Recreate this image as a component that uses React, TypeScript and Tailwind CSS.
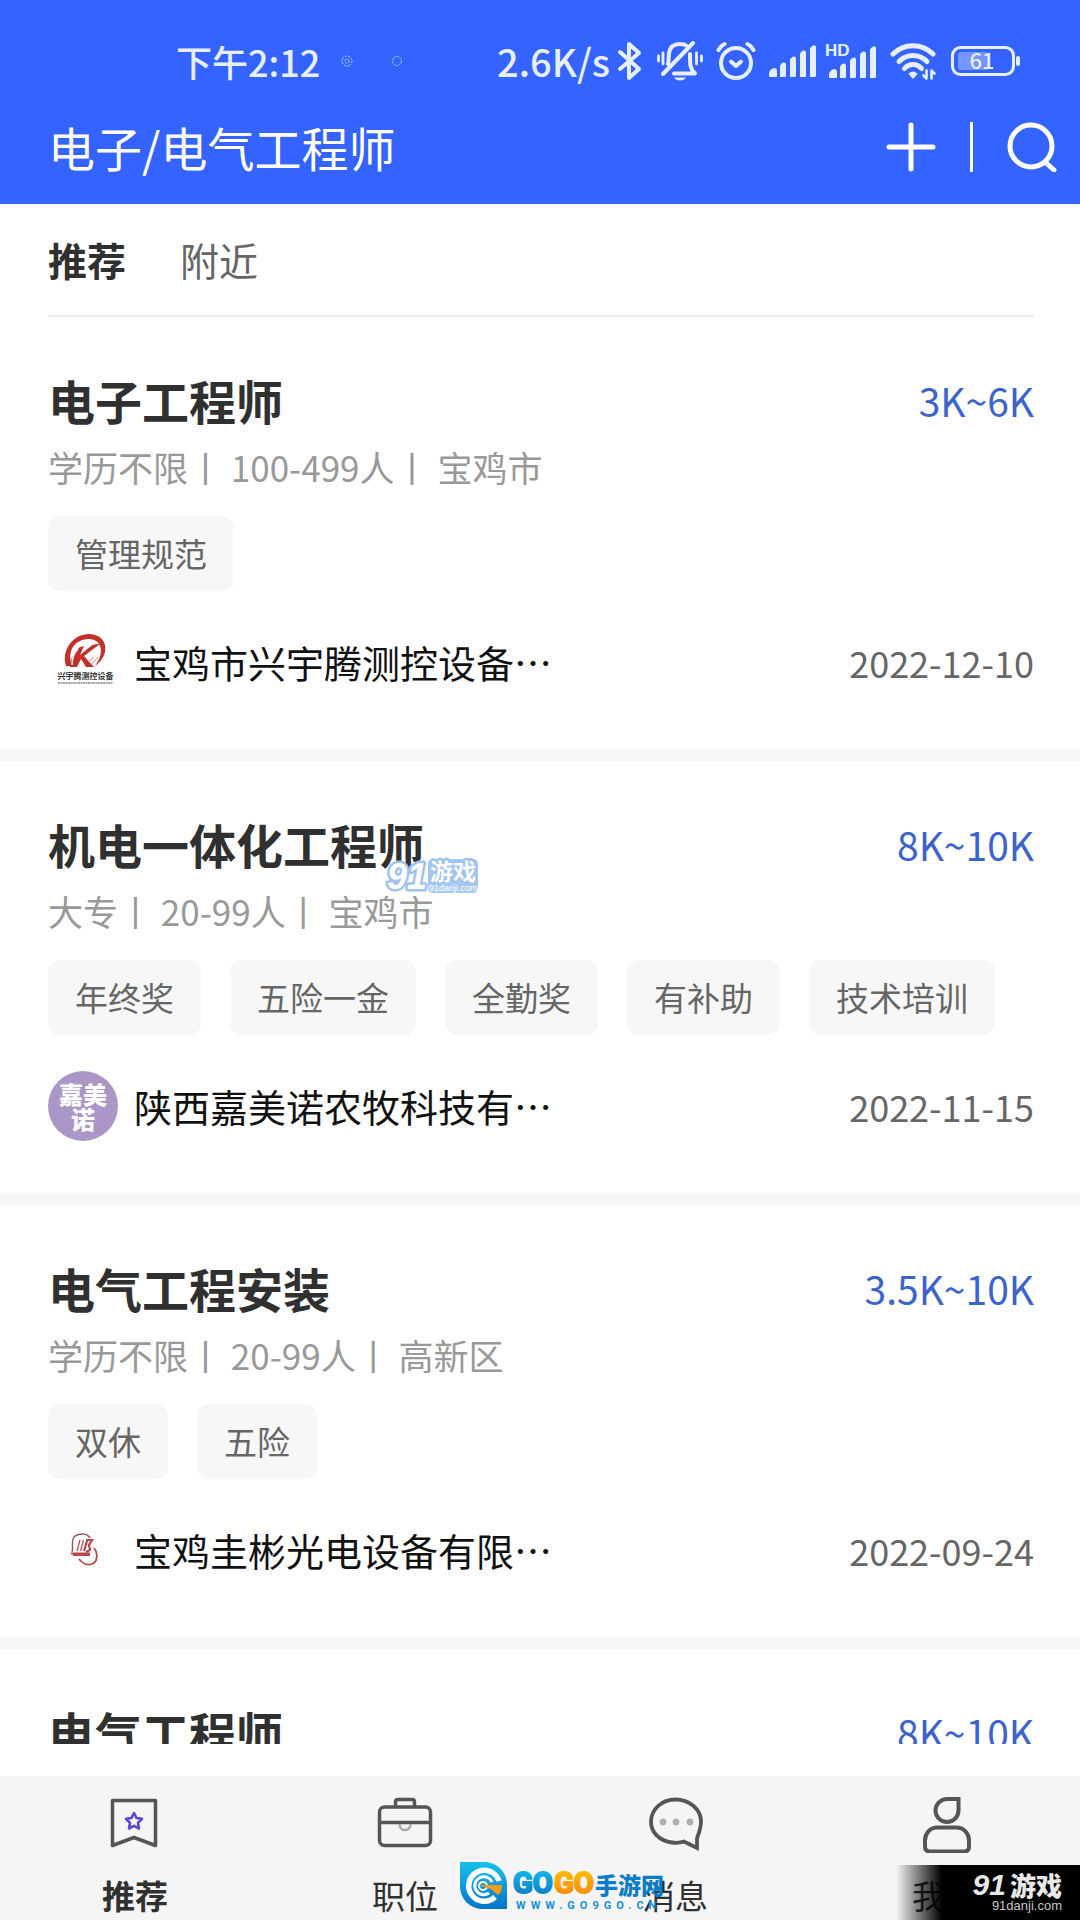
interface Job {
  title: string;
  salary: string;
  meta: string;
  tags: string[];
  company: string;
  date: string;
  logo: 'xyt' | 'jmn' | 'gb';
}

const jobs: Job[] = [
  {
    title: '电子工程师',
    salary: '3K~6K',
    meta: '学历不限丨 100-499人丨 宝鸡市',
    tags: ['管理规范'],
    company: '宝鸡市兴宇腾测控设备…',
    date: '2022-12-10',
    logo: 'xyt',
  },
  {
    title: '机电一体化工程师',
    salary: '8K~10K',
    meta: '大专丨 20-99人丨 宝鸡市',
    tags: ['年终奖', '五险一金', '全勤奖', '有补助', '技术培训'],
    company: '陕西嘉美诺农牧科技有…',
    date: '2022-11-15',
    logo: 'jmn',
  },
  {
    title: '电气工程安装',
    salary: '3.5K~10K',
    meta: '学历不限丨 20-99人丨 高新区',
    tags: ['双休', '五险'],
    company: '宝鸡圭彬光电设备有限…',
    date: '2022-09-24',
    logo: 'gb',
  },
];

const SignalBars = () => (
  <g fill="currentColor">
    <path d="M0 31v-3q1-4 5-5q3 0 3 3v5q0 1-1 1H1q-1 0-1-1z" />
    <path d="M11 32v-11q0-2 3-3.500q3-.5 3 2v11q0 1.500-1.500 1.500z" />
    <path d="M21 32v-17q0-2 3-3.500q3-.5 3 2v17q0 1.500-1.500 1.500z" />
    <path d="M31 32v-23q0-2 3-3.500q3-.5 3 2v23q0 1.500-1.500 1.500z" />
    <path d="M41 32v-28q0-2 3-3.500q3-1 3 2v28q0 1.500-1.500 1.500z" />
  </g>
);

const StatusIcons = () => (
  <div className="flex items-center gap-[13px]">
    <div className="flex items-center gap-[6px]">
      <span className="text-[38px] leading-none font-medium">2.6K/s</span>
      {/* Bluetooth */}
      <svg width="28" height="40" viewBox="0 0 28 40" fill="none" stroke="currentColor" strokeWidth="4" strokeLinejoin="round" strokeLinecap="round">
        <path d="M4 11 23 28 13 37V3L23 12 4 28" />
      </svg>
    </div>
    {/* Muted bell */}
    <svg width="46" height="40" viewBox="0 0 46 40" fill="none" stroke="currentColor" strokeLinecap="round">
      <path d="M11 23c1-3 .5-8 1-11C13 6 17 3 23 3c3 0 5 .5 7 2" strokeWidth="4" />
      <path d="M36 2 6 33" strokeWidth="4" />
      <path d="M33 13c0 11 0 15 5 19.500H17" strokeWidth="4" strokeLinejoin="round" />
      <path d="M17 36.500h12c-2 4-10 4-12 0z" fill="currentColor" stroke="none" />
      <path d="M1.500 15v5M6 12v11M39.500 12v11M44.500 15v5" strokeWidth="2.800" />
    </svg>
    {/* Alarm */}
    <svg width="40" height="40" viewBox="0 0 40 40" fill="none" stroke="currentColor" strokeLinecap="round" strokeLinejoin="round">
      <circle cx="20" cy="22" r="15" strokeWidth="4" />
      <path d="M2.500 9q2-4 6-6M37.500 9q-2-4-6-6" strokeWidth="4" />
      <path d="M15 20.500l5 4.500 5-4.500" strokeWidth="4" />
    </svg>
    <div className="flex items-center gap-[9px]">
      <svg width="48" height="32" viewBox="0 0 48 32">
        <SignalBars />
      </svg>
      <svg className="overflow-visible" width="51" height="36" viewBox="0 0 51 36">
        <g transform="translate(3 3)">
          <SignalBars />
        </g>
        <rect x="0" y="0" width="24" height="15" fill="#3563ff" />
        <text x="-1" y="13" fontSize="17" fontWeight="700" fontFamily="'Liberation Sans', sans-serif" fill="currentColor">HD</text>
      </svg>
    </div>
    {/* Wifi with traffic arrows */}
    <svg width="48" height="38" viewBox="0 0 48 38" fill="none" stroke="currentColor" strokeLinecap="round">
      <path d="M3 12C14 1 32 1 43 12" strokeWidth="5" />
      <path d="M9 19.500C17 11.500 29 11.500 37 19.500" strokeWidth="5" />
      <path d="M14.500 26.500C19 21 27 21 31.500 26.500" strokeWidth="5" />
      <path d="M18.500 32c2-3.500 7-3.500 9 0L23 37z" fill="currentColor" stroke="none" />
      <path d="M36.500 28.500v8l-3-3M41.500 36.500v-8l3 3" strokeWidth="2.600" strokeLinejoin="round" />
    </svg>
    {/* Battery */}
    <svg width="69" height="32" viewBox="0 0 69 32">
      <rect x="1.500" y="2.500" width="61" height="27" rx="8" fill="none" stroke="currentColor" strokeWidth="3" />
      <rect x="7" y="7" width="31" height="18" rx="3" fill="#7695ff" />
      <rect x="65" y="11" width="4" height="10" rx="2" fill="currentColor" />
      <text x="31" y="24" fontSize="22" fontWeight="500" textAnchor="middle" fill="currentColor">61</text>
    </svg>
  </div>
);

const CompanyLogo = ({ kind }: { kind: Job['logo'] }) => {
  if (kind === 'jmn') {
    return (
      <div className="flex h-[70px] w-[70px] flex-col items-center justify-center rounded-full bg-[#ab97c7] text-[24px] leading-[25px] font-black text-white">
        <span>嘉美</span>
        <span>诺</span>
      </div>
    );
  }
  if (kind === 'xyt') {
    return (
      <svg width="70" height="70" viewBox="0 0 70 70">
        <path d="M18 39C13 22 26 7 41 7c18 0 23 20 6 32 10-13 7-27-6-27C28 12 18 23 24 39z" fill="#c3302c" />
        <path d="M22 40c0-8 4-15 10-20l4-1-4 9 11-9c3-2 6-2 9-2L36 29l10 11h-8l-5-8-4 8z" fill="#c3302c" />
        <path d="M30 22c-4 4-6 9-6 16" fill="none" stroke="#fff" strokeWidth="1.500" />
        <path d="M43 38l7-8M40 35l6-5" fill="none" stroke="#d9827f" strokeWidth="1" />
        <text x="37.500" y="52" fontSize="8" fontWeight="700" textAnchor="middle" fill="#333">兴宇腾测控设备</text>
        <path d="M10 56h55" stroke="#888" strokeWidth="1.500" strokeDasharray="2 .5" />
      </svg>
    );
  }
  return (
    <svg width="70" height="70" viewBox="0 0 70 70" fill="none" stroke="#b5474c">
      <path d="M24 37c2-4-2-12 3-16 5-3 12-3 15 2" strokeWidth="1.500" stroke="#8d5a66" />
      <path d="M23 38.500h19M25 40h17" strokeWidth="1.800" />
      <path d="M29 36l3-11M32.500 36l3-11" strokeWidth="1.200" />
      <path d="M36 36l3-10M38 25h6l-3 5 1 5-4 2" strokeWidth="2.200" />
      <path d="M46 33c4 5 4 14-2 16-5 2-10-1-13-5" strokeWidth="1.800" />
    </svg>
  );
};

const JobHeading = ({ title, salary }: { title: string; salary: string }) => (
  <div className="flex h-[68px] items-center justify-between">
    <h2 className="text-[47px] leading-[68px] font-bold text-[#303030]">{title}</h2>
    <span className="text-[39px] leading-[68px] text-[#3c64cc]">{salary}</span>
  </div>
);

const JobCard = ({ job }: { job: Job }) => (
  <article className="border-b-[12px] border-[#f7f7f7] pt-[49px] pr-[46px] pb-[52px] pl-12">
    <JobHeading title={job.title} salary={job.salary} />
    <p className="text-[35px] leading-[66px] text-[#999]">{job.meta}</p>
    <ul className="mt-4 flex gap-[29px]">
      {job.tags.map(tag => (
        <li key={tag} className="rounded-xl bg-[#f7f7f7] px-[27px] text-[33px] leading-[75px] text-[#666]">
          {tag}
        </li>
      ))}
    </ul>
    <div className="mt-9 flex items-center">
      <CompanyLogo kind={job.logo} />
      <span className="ml-4 text-[38px] leading-[70px] text-[#111]">{job.company}</span>
      <time className="ml-auto text-[36px] leading-[70px] text-[#666]">{job.date}</time>
    </div>
  </article>
);

const navItems = [
  {
    label: '推荐',
    active: true,
    icon: (
      <svg width="60" height="60" viewBox="0 0 60 60" fill="none" stroke="#555" strokeWidth="3.500" strokeLinejoin="round">
        <path d="M7.500 7.500h43v45L29 44.500 7.500 52.500z" />
        <path d="M29 20l2.500 5 5.500.8-4 4 1 5.700-5-2.700-5 2.700 1-5.700-4-4 5.500-.8z" stroke="#5b46d8" strokeWidth="2.600" />
      </svg>
    ),
  },
  {
    label: '职位',
    icon: (
      <svg width="60" height="60" viewBox="0 0 60 60" fill="none" stroke="#555" strokeWidth="3.500">
        <rect x="4.500" y="14" width="51" height="38.500" rx="5" />
        <path d="M20.500 13V9q0-2.500 2.500-2.500h14q2.500 0 2.500 2.500v4M4.500 29.500h51" />
        <path d="M24.500 31c0 8 11 8 11 0" stroke="#aaa" strokeWidth="2.500" />
      </svg>
    ),
  },
  {
    label: '消息',
    icon: (
      <svg width="60" height="60" viewBox="0 0 60 60" fill="none" stroke="#555" strokeWidth="3.800">
        <path d="M52 45.500v9.500L39 48.500c-4 1.500-8 1.500-12 1C14 48 6 39 6 29 6 16 17 6.500 30.500 6.500S56 16 56 28.500c0 7-2.500 12-4 17z" />
        <g fill="#b0b0b0" stroke="none">
          <circle cx="18" cy="29" r="3.400" />
          <circle cx="31" cy="29" r="3.400" />
          <circle cx="45" cy="29" r="3.400" />
        </g>
      </svg>
    ),
  },
  {
    label: '我的',
    icon: (
      <svg width="60" height="60" viewBox="0 0 60 60" fill="none" stroke="#555" strokeWidth="4">
        <path d="M43.500 6v11.500a11.500 11.500 0 1 1-11.500-11.500z" />
        <path d="M22 36h19c8 0 13 6 13 13v6q0 5-5 5H15q-5 0-5-5v-6c0-7 5-13 12-13z" transform="translate(0 -1.500)" />
      </svg>
    ),
  },
];

const GogoLogo = () => (
  <svg className="absolute top-[84px] left-[459px]" width="210" height="54" viewBox="0 0 210 54">
    <defs>
      <linearGradient id="gogo-blue" x1="0" y1="0" x2="0" y2="1">
        <stop offset="0" stopColor="#16c0ea" />
        <stop offset="1" stopColor="#0674c8" />
      </linearGradient>
      <linearGradient id="gogo-orange" x1="0" y1="0" x2="0" y2="1">
        <stop offset="0" stopColor="#ffc400" />
        <stop offset="1" stopColor="#f98208" />
      </linearGradient>
    </defs>
    <path d="M1 2h24c13 0 23 10 23 23v24H24C11 49 1 39 1 26z" fill="url(#gogo-blue)" />
    <path d="M40 21A15.500 15.500 0 1 0 36 37" fill="none" stroke="#fff" strokeWidth="5.500" />
    <path d="M33 22A9 9 0 1 0 30 33" fill="none" stroke="#fff" strokeWidth="3" />
    <circle cx="24" cy="26" r="4" fill="none" stroke="#fff" strokeWidth="2" />
    <path d="M19 25h24c0 4-1 8-4 10L32 29z" fill="#f79a1c" />
    <g fontFamily="Roboto, sans-serif" fontWeight="700" fontSize="29">
      <text x="54" y="33" fill="url(#gogo-blue)" stroke="url(#gogo-blue)" strokeWidth="2">GO</text>
      <text x="95" y="33" fill="url(#gogo-orange)" stroke="url(#gogo-orange)" strokeWidth="2">GO</text>
    </g>
    <text x="136" y="34" fontSize="23" fontWeight="900" fill="#0b7cc9">手游网</text>
    <text x="57" y="49" fontFamily="Roboto, sans-serif" fontWeight="700" fontSize="11" className="tracking-[5px]" fill="#1590dd">
      WWW.GO9GO.CN
    </text>
  </svg>
);

const App = () => {
  return (
    <div
      lang="zh-CN"
      className="relative flex h-screen flex-col overflow-hidden bg-white font-['Noto_Sans_CJK_SC',sans-serif]"
    >
      {/* Header */}
      <header className="shrink-0 bg-[#3563ff] pt-[15px] pb-[18px] text-white">
        <div className="flex h-[92px] items-center pr-[60px] pl-44 text-[#e6efff]">
          <span className="text-[36px] leading-none font-medium">下午2:12</span>
          <svg className="ml-5" width="64" height="14" viewBox="0 0 64 14" fill="none" stroke="#b9cbff" strokeDasharray="2 1">
            <circle cx="7" cy="7" r="5" />
            <circle cx="7" cy="7" r="2" />
            <circle cx="57" cy="7" r="4.500" />
          </svg>
          <div className="ml-auto">
            <StatusIcons />
          </div>
        </div>
        <div className="flex h-[79px] items-center justify-between pr-[23px] pl-12">
          <h1 className="text-[47px] leading-none">电子/电气工程师</h1>
          <div className="flex items-center gap-[34px]">
            <button type="button" aria-label="添加">
              <svg width="50" height="50" viewBox="0 0 50 50" stroke="currentColor" strokeWidth="5" strokeLinecap="round">
                <path d="M25 3v44M3 25h44" />
              </svg>
            </button>
            <span className="h-[50px] w-[3px] bg-white" />
            <button type="button" aria-label="搜索">
              <svg width="50" height="50" viewBox="0 0 50 50" fill="none" stroke="currentColor" strokeWidth="5" strokeLinecap="round">
                <circle cx="24" cy="24" r="21" />
                <path d="M38 40l9 8" />
              </svg>
            </button>
          </div>
        </div>
      </header>

      {/* Job list */}
      <main className="min-h-0 flex-1 overflow-hidden">
        <div className="mr-[46px] ml-12 flex h-[113px] items-center gap-[54px] border-b-2 border-[#ebebeb] text-[39px]">
          <button type="button" className="font-bold text-[#303030]">推荐</button>
          <button type="button" className="text-[#666]">附近</button>
        </div>
        {jobs.map(job => (
          <JobCard key={job.title} job={job} />
        ))}
        <article className="pt-[49px] pr-[46px] pl-12">
          <JobHeading title="电气工程师" salary="8K~10K" />
        </article>
      </main>

      {/* Bottom nav */}
      <nav className="relative mt-8 grid h-36 shrink-0 grid-cols-4 bg-[#f5f5f5]">
        {navItems.map(item => (
          <a key={item.label} href="#" className="flex flex-col items-center pt-[17px] text-[#303030]">
            {item.icon}
            <span className={item.active ? 'mt-[18px] text-[33px] leading-[48px] font-bold' : 'mt-[18px] text-[33px] leading-[48px]'}>
              {item.label}
            </span>
          </a>
        ))}
        <GogoLogo />
        <div className="absolute right-0 bottom-0 flex h-[55px] w-[184px] flex-col items-end bg-linear-to-r from-transparent to-black to-25% pr-[18px]">
          <div className="flex items-center gap-1 pt-[6px] text-[#e8e8e8]">
            <span className="font-['Liberation_Sans',sans-serif] text-[30px] leading-[28px] font-bold italic">91</span>
            <span className="text-[26px] leading-[28px] font-black">游戏</span>
          </div>
          <span className="font-['Liberation_Sans',sans-serif] text-[13px] leading-[14px] text-[#c8c8c8]">91danji.com</span>
        </div>
      </nav>

      {/* Floating 91 badge */}
      <svg className="absolute top-[856px] left-[382px]" width="100" height="42" viewBox="0 0 100 42">
        <rect x="46" y="3" width="50" height="34" rx="5" fill="#a9c8f0" />
        <g fill="#fff" stroke="#a0c3f0" strokeWidth="5" paintOrder="stroke" strokeLinejoin="round">
          <text x="5" y="33" fontSize="36" fontWeight="700" fontStyle="italic" fontFamily="'Liberation Sans', sans-serif">91</text>
          <text x="48" y="24" fontSize="23" fontWeight="700">游戏</text>
        </g>
        <text x="47" y="35" fontSize="9" fill="#fff" fontFamily="'Liberation Sans', sans-serif">91danji.com</text>
      </svg>
    </div>
  );
};

export default App;
